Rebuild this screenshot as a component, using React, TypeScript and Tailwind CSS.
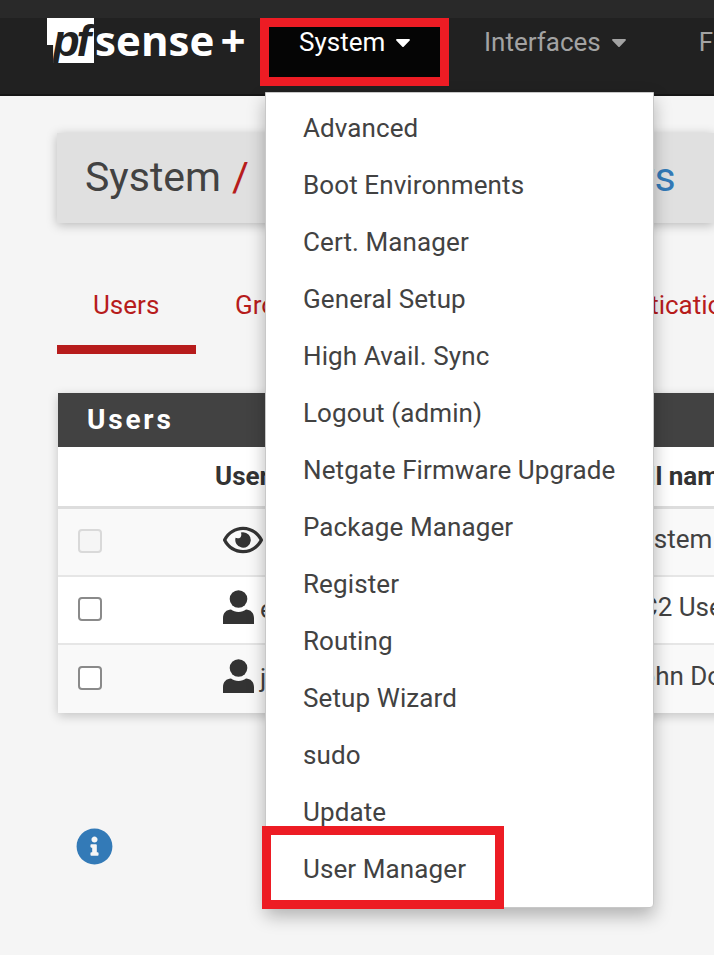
import React from 'react';
import { FaCaretDown, FaInfoCircle, FaRegEye } from 'react-icons/fa';

const menuItems = [
  'Advanced',
  'Boot Environments',
  'Cert. Manager',
  'General Setup',
  'High Avail. Sync',
  'Logout (admin)',
  'Netgate Firmware Upgrade',
  'Package Manager',
  'Register',
  'Routing',
  'Setup Wizard',
  'sudo',
  'Update',
  'User Manager',
];

const rows = [
  { name: 'admin', full: 'System Administrator', icon: 'eye', locked: true },
  { name: 'ec2-user', full: 'EC2 User', icon: 'user', locked: false },
  { name: 'john', full: 'John Doe', icon: 'user', locked: false },
];

const UserIcon = () => (
  <svg viewBox="0 0 31 34" className="w-[31px] h-[34px] ml-[8px] mb-[6px] shrink-0 text-[#333]" fill="currentColor">
    <circle cx="15.5" cy="9" r="8.8" />
    <path d="M0 34V28C0 23 3.5 19.5 8 19.5C10 21 12.5 22 15.5 22C18.5 22 21 21 23 19.5C27.5 19.5 31 23 31 28V34Z" />
  </svg>
);

const Navbar = () => (
  <nav className="h-[96px] shrink-0 bg-[#212121] border-b-2 border-[#161616] flex flex-col">
    <div className="h-[18px] shrink-0 bg-[#292929]" />
    <div className="flex items-start whitespace-nowrap">
      <div className="ml-[47px] w-[213px] shrink-0 flex items-start">
        <div className="w-[47px] h-[45px] bg-white [clip-path:polygon(0_0,100%_0,100%_100%,13%_100%,13%_60%,0_60%)] flex items-center justify-center">
          <span className="text-[#212121] text-[44px] leading-none font-bold italic tracking-[-3px] font-['Liberation_Sans',sans-serif]">pf</span>
        </div>
        <span className="ml-[1px] mt-[1px] text-white text-[42px] leading-[42px] font-bold tracking-[0.1px] font-['Open_Sans',sans-serif]">sense</span>
        <span className="ml-[6px] mt-[1px] text-white text-[44px] leading-[42px] font-bold font-['Open_Sans',sans-serif]">+</span>
      </div>
      <div className="w-[189px] h-[60px] shrink-0 bg-[#050505] pl-[39px] pt-[7px] flex items-start gap-[10px] text-white text-[26px] leading-[34px]">
        System
        <FaCaretDown className="mt-[5px] w-[16px] h-[24px]" />
      </div>
      <div className="ml-[35px] shrink-0 pt-[7px] flex items-start gap-[10px] text-[#a3a3a3] text-[26px] leading-[34px]">
        Interfaces
        <FaCaretDown className="mt-[5px] w-[16px] h-[24px]" />
      </div>
      <div className="ml-[72px] shrink-0 pt-[7px] text-[#a3a3a3] text-[26px] leading-[34px]">Firewall</div>
    </div>
  </nav>
);

const Breadcrumb = () => (
  <div className="h-[90px] ml-[57px] mt-[37px] bg-[#e0e0e0] shadow-[0_2px_10px_rgba(0,0,0,0.25)] pl-[28px] flex items-center text-[41px] text-[#424242] whitespace-nowrap">
    System <span className="ml-[11px] mr-[18px] text-[#b71c1c]">/</span>
    User Manager <span className="ml-[11px] mr-[21px] text-[#b71c1c]">/</span>
    <span className="text-[#337ab7]">Users</span>
  </div>
);

const Tabs = () => (
  <div className="ml-[57px] mt-[59px] h-[72px] flex text-[26px] text-[#b71c1c] whitespace-nowrap">
    <div className="w-[139px] shrink-0 h-full pt-[4px] pl-[36px] border-b-[9px] border-[#b71c1c]">Users</div>
    <div className="w-[152px] shrink-0 pt-[4px] pl-[39px]">Groups</div>
    <div className="w-[157px] shrink-0 pt-[4px] pl-[36px]">Settings</div>
    <div className="shrink-0 pt-[4px] pl-[63px]">Authentication Servers</div>
  </div>
);

const UsersPanel = () => (
  <section className="ml-[58px] mt-[39px] w-[760px] shrink-0 bg-white shadow-[0_3px_10px_rgba(0,0,0,0.2)]">
    <h2 className="h-[54px] bg-[#424242] pl-[29px] flex items-center text-white text-[28px] font-bold tracking-[2.8px]">Users</h2>
    <table className="w-full table-fixed text-[26px] text-[#424242] whitespace-nowrap">
      <colgroup>
        <col className="w-[157px]" />
        <col className="w-[405px]" />
        <col />
      </colgroup>
      <thead>
        <tr className="h-[60px] border-b-[3px] border-[#ddd] text-left text-[#333]">
          <th />
          <th className="font-bold">Username</th>
          <th className="font-bold">Full name</th>
        </tr>
      </thead>
      <tbody>
        {rows.map((row, i) => (
          <tr key={row.name} className={`h-[68.5px] border-b-2 border-[#e6e6e6] last:border-b-0 ${i === 1 ? 'bg-white' : 'bg-[#f9f9f9]'}`}>
            <td className="pl-[20px] pb-[2px]">
              <div className={`w-[24px] h-[24px] rounded-[4px] border-2 ${row.locked ? 'border-[#d9d9d9] bg-[#f5f5f5]' : 'border-[#8a8a8a] bg-white'}`} />
            </td>
            <td>
              <div className="flex items-center gap-[6px]">
                {row.icon === 'eye' ? (
                  <FaRegEye className="w-[40px] h-[36px] ml-[8px] mb-[4px] text-[#333]" />
                ) : (
                  <UserIcon />
                )}
                {row.name}
              </div>
            </td>
            <td className="pl-[6px] pb-[5px]">{row.full}</td>
          </tr>
        ))}
      </tbody>
    </table>
  </section>
);

const SystemMenu = () => (
  <ul className="absolute left-[265px] top-[92px] w-[389px] h-[816px] bg-white border border-[#c8c8c8] rounded-b-[4px] shadow-[0_8px_18px_rgba(0,0,0,0.28)] pt-[7px] text-[26px] tracking-[0.1px] text-[#424242]">
    {menuItems.map((item) => (
      <li key={item} className="h-[57px] pl-[37px] flex items-center whitespace-nowrap">{item}</li>
    ))}
  </ul>
);

export default function App() {
  return (
    <div className="relative w-[720px] h-[955px] bg-white overflow-hidden font-['Roboto',sans-serif]">
      <div className="w-[714px] h-full bg-[#f5f5f5] overflow-hidden flex flex-col">
        <Navbar />
        <Breadcrumb />
        <Tabs />
        <UsersPanel />
        <div className="ml-[76px] mt-[115px]">
          <FaInfoCircle className="w-[37px] h-[37px] text-[#337ab7]" />
        </div>
      </div>
      <SystemMenu />
      {/* red annotation boxes */}
      <div className="absolute left-[260px] top-[18px] w-[189px] h-[68px] border-[9px] border-[#ed1c24]" />
      <div className="absolute left-[262px] top-[826px] w-[242px] h-[83px] border-[9px] border-[#ed1c24]" />
    </div>
  );
}
